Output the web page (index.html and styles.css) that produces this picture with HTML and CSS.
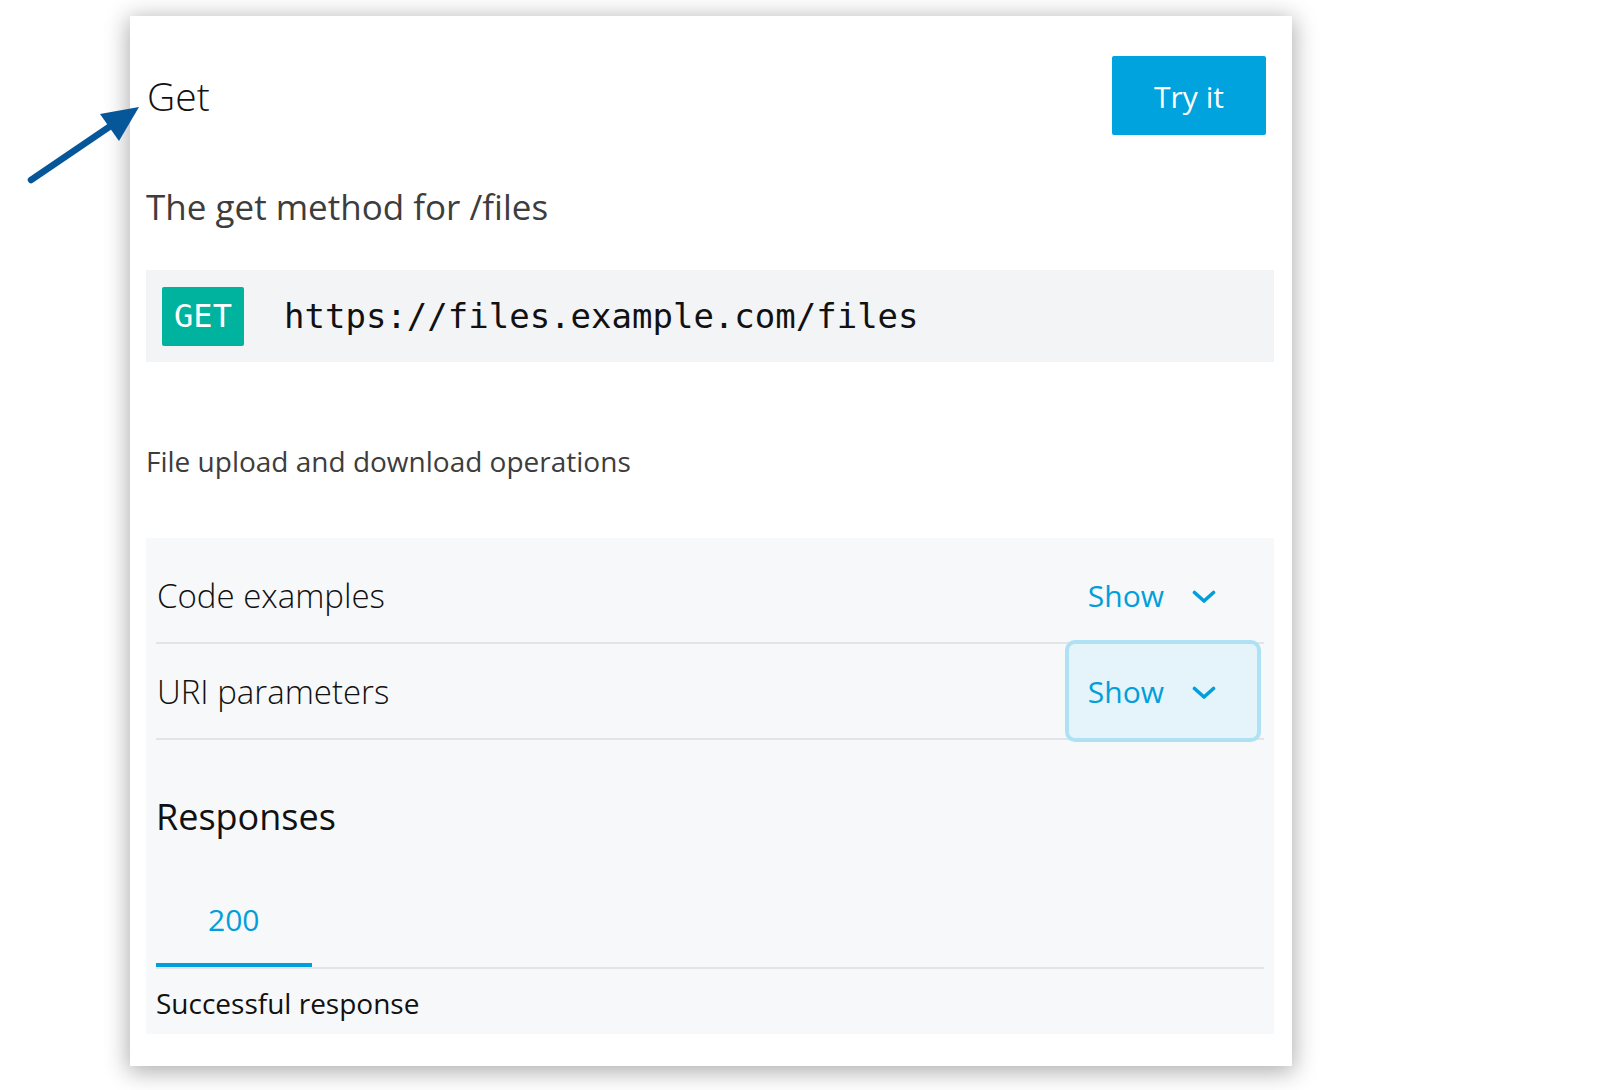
FILE: index.html
```html
<!DOCTYPE html>
<html lang="en">
<head>
<meta charset="utf-8">
<title>Get</title>
<link rel="stylesheet" href="styles.css">
</head>
<body>
<div class="card">
  <div class="header">
    <h1 class="title">Get</h1>
    <button class="try-btn">Try it</button>
  </div>
  <p class="desc">The get method for /files</p>
  <div class="endpoint">
    <span class="method">GET</span>
    <span class="url">https://files.example.com/files</span>
  </div>
  <p class="summary">File upload and download operations</p>
  <div class="panel">
    <div class="row">
      <span class="row-title">Code examples</span>
      <button class="toggle">
        <span>Show</span>
        <svg class="chev" width="24" height="14" viewBox="0 0 24 14"><polyline points="2.5,2.5 12,11 21.5,2.5" fill="none" stroke="#009fdb" stroke-width="3.6" stroke-linecap="round" stroke-linejoin="round"/></svg>
      </button>
    </div>
    <div class="row">
      <span class="row-title">URI parameters</span>
      <button class="toggle focused">
        <span>Show</span>
        <svg class="chev" width="24" height="14" viewBox="0 0 24 14"><polyline points="2.5,2.5 12,11 21.5,2.5" fill="none" stroke="#009fdb" stroke-width="3.6" stroke-linecap="round" stroke-linejoin="round"/></svg>
      </button>
    </div>
    <h2 class="responses">Responses</h2>
    <div class="tabs">
      <span class="tab active">200</span>
    </div>
    <p class="resp-desc">Successful response</p>
  </div>
</div>
<svg class="arrow" width="160" height="200" viewBox="0 0 160 200">
  <line x1="31" y1="180" x2="112" y2="125" stroke="#06569a" stroke-width="6.5" stroke-linecap="round"/>
  <polygon points="139,107 100,114 119,141" fill="#06569a"/>
</svg>
</body>
</html>
```
FILE: styles.css
```css
* { box-sizing: border-box; }
html, body { margin: 0; padding: 0; background: #ffffff; }
body {
  font-family: "Open Sans", "Noto Sans", sans-serif;
  width: 1598px;
  height: 1090px;
  overflow: hidden;
  position: relative;
}
.card {
  margin: 16px 0 0 130px;
  width: 1162px;
  height: 1050px;
  background: #ffffff;
  padding: 40px 18px 33px 16px;
  box-shadow: 0 4px 22px 2px rgba(0, 0, 0, 0.32);
}
.header {
  display: flex;
  justify-content: space-between;
  align-items: center;
}
.title {
  margin: 0 0 0 1px;
  font-size: 39px;
  font-weight: 300;
  line-height: 50px;
  color: #111;
}
.try-btn {
  width: 154px;
  height: 79px;
  margin-right: 8px;
  border: none;
  border-radius: 2px;
  background: #00a3dd;
  color: #fff;
  font-family: "Open Sans", sans-serif;
  font-size: 30px;
  font-weight: 400;
  padding: 2px 0 0 0;
}
.desc {
  margin: 50px 0 0 0;
  font-size: 35px;
  line-height: 44px;
  color: #3d3d3d;
}
.endpoint {
  margin-top: 41px;
  height: 92px;
  background: #f3f4f6;
  padding: 0 16px;
  display: flex;
  align-items: center;
}
.method {
  width: 82px;
  height: 59px;
  display: flex;
  align-items: center;
  justify-content: center;
  background: #00b39e;
  color: #fff;
  border-radius: 2px;
  font-family: "DejaVu Sans Mono", "Liberation Mono", monospace;
  font-size: 32px;
  font-weight: 500;
}
.url {
  margin-left: 40px;
  font-family: "DejaVu Sans Mono", "Liberation Mono", monospace;
  font-size: 34px;
  color: #111;
}
.summary {
  margin: 81px 0 0 0;
  font-size: 28px;
  line-height: 36px;
  color: #3d3d3d;
}
.panel {
  margin-top: 59px;
  background: #f7f8fa;
  padding: 10px 10px 12px 10px;
}
.row {
  height: 96px;
  display: flex;
  justify-content: space-between;
  align-items: stretch;
  border-bottom: 2px solid #e2e4e7;
}
.row-title {
  align-self: center;
  font-size: 33px;
  font-weight: 300;
  color: #111;
  padding-left: 1px;
}
.toggle {
  display: flex;
  align-items: center;
  gap: 28px;
  padding: 0 41px 0 19px;
  margin-right: 7px;
  border: none;
  background: transparent;
  color: #009fdb;
  font-family: "Open Sans", sans-serif;
  font-size: 30px;
  border-radius: 6px;
}
.toggle.focused {
  background: #e5f3fa;
  outline: 4px solid #aee1f4;
  outline-offset: 0;
}
.chev { display: block; margin-top: 3px; }
.responses {
  margin: 53px 0 0 0;
  font-size: 36px;
  font-weight: 400;
  line-height: 48px;
  color: #111;
}
.tabs {
  margin-top: 32px;
  display: flex;
  border-bottom: 2px solid #e2e4e7;
}
.tab {
  padding: 27px 53px 23px 52px;
  font-size: 30px;
  line-height: 40px;
  color: #009fdb;
  border-bottom: 4px solid #009fdb;
}
.resp-desc {
  margin: 15px 0 0 0;
  font-size: 28px;
  line-height: 38px;
  color: #111;
}
.arrow {
  position: absolute;
  left: 0;
  top: 0;
}
```
